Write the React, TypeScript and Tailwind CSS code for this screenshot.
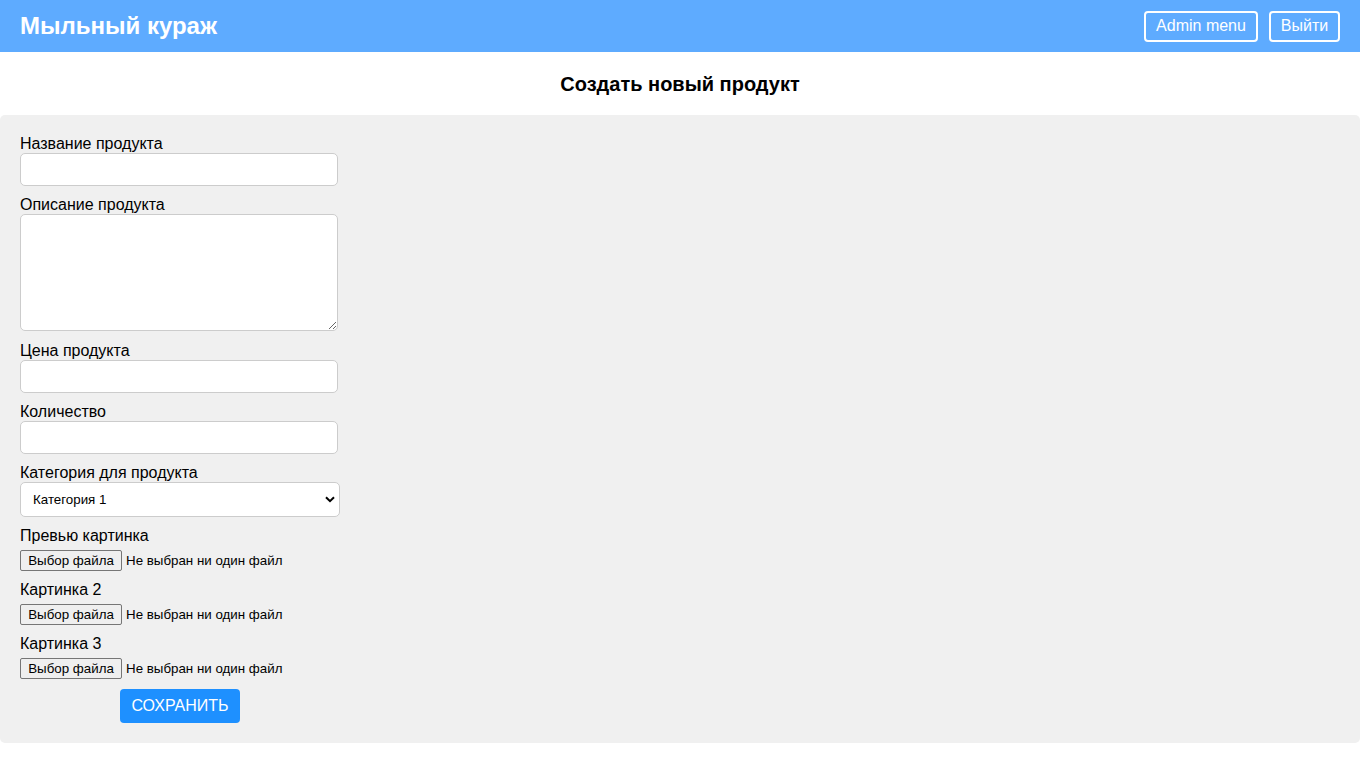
import { useState } from 'react';

const categories = ['Категория 1', 'Категория 2', 'Категория 3'];

function FileField({ label }: { label: string }) {
  return (
    <>
      <label className="block h-[18px] text-base leading-[18px] text-black">{label}</label>
      <div className="mt-[5px] mb-[10px] flex h-[21px] items-center">
        <span className="flex h-[21px] w-[102px] items-center justify-center rounded-[2px] border border-[#767676] bg-[#efefef] text-[13.33px] text-black">
          Выбор файла
        </span>
        <span className="ml-[4px] text-[13.33px] text-black">Не выбран ни один файл</span>
      </div>
    </>
  );
}

export default function App() {
  const [category, setCategory] = useState(categories[0]);

  return (
    <div className="min-h-screen bg-white font-['Liberation_Sans',Arial,sans-serif]">
      {/* Header */}
      <div className="flex h-[52px] items-center justify-between bg-[#5eabff] px-[20px]">
        <div className="text-[24px] font-bold text-white">Мыльный кураж</div>
        <div className="flex gap-[11px]">
          <button className="h-[31px] w-[114px] rounded-[4px] border-2 border-white text-base text-white">
            Admin menu
          </button>
          <button className="h-[31px] w-[71px] rounded-[4px] border-2 border-white text-base text-white">
            Выйти
          </button>
        </div>
      </div>

      <div className="flex h-[63px] items-center justify-center text-[20px] font-bold text-black">
        Создать новый продукт
      </div>

      {/* Form panel */}
      <div className="rounded-[5px] bg-[#f0f0f0] px-[20px] pt-[20px] pb-[20px]">
        <form className="flex w-[320px] flex-col">
          <label className="block h-[18px] text-base leading-[18px] text-black">Название продукта</label>
          <input className="mb-[10px] h-[33px] w-[318px] rounded-[5px] border border-[#ccc] bg-white px-2" />

          <label className="block h-[18px] text-base leading-[18px] text-black">Описание продукта</label>
          <textarea className="mb-[11px] block h-[117px] w-[318px] rounded-[5px] border border-[#ccc] bg-white px-2" />

          <label className="block h-[18px] text-base leading-[18px] text-black">Цена продукта</label>
          <input className="mb-[10px] h-[33px] w-[318px] rounded-[5px] border border-[#ccc] bg-white px-2" />

          <label className="block h-[18px] text-base leading-[18px] text-black">Количество</label>
          <input className="mb-[10px] h-[33px] w-[318px] rounded-[5px] border border-[#ccc] bg-white px-2" />

          <label className="block h-[18px] text-base leading-[18px] text-black">Категория для продукта</label>
          <div className="relative mb-[10px] h-[35px] w-[320px]">
            <select
              value={category}
              onChange={(e) => setCategory(e.target.value)}
              className="h-[35px] w-[320px] appearance-none rounded-[5px] border border-[#ccc] bg-white pl-[12px] text-[13.33px] text-black"
            >
              {categories.map((c) => (
                <option key={c}>{c}</option>
              ))}
            </select>
            <svg
              className="pointer-events-none absolute top-[14px] right-[5px]"
              width="10"
              height="7"
              viewBox="0 0 10 7"
            >
              <path d="M1 1.2 L5 5.2 L9 1.2" fill="none" stroke="#000" strokeWidth="2" />
            </svg>
          </div>

          <FileField label="Превью картинка" />
          <FileField label="Картинка 2" />
          <FileField label="Картинка 3" />

          <div className="flex justify-center">
            <button
              type="button"
              className="h-[34px] w-[120px] rounded-[4px] bg-[#1e90ff] text-base text-white"
            >
              СОХРАНИТЬ
            </button>
          </div>
        </form>
      </div>
    </div>
  );
}
